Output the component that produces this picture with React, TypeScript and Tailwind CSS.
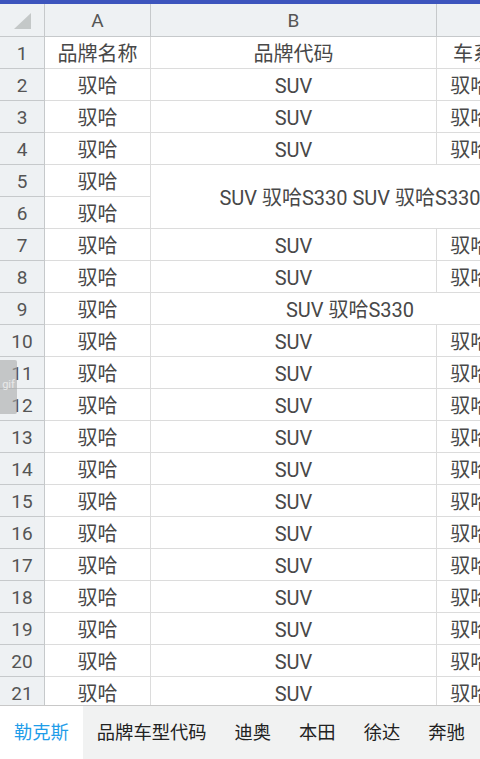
import React from "react";

type Row = { n: number; a: string; b?: string; c?: string; merge?: "span2" | "span2x2" | "skip" };

const rows: Row[] = [
  { n: 1, a: "品牌名称", b: "品牌代码", c: "车系名称" },
  { n: 2, a: "驭哈", b: "SUV", c: "驭哈S330" },
  { n: 3, a: "驭哈", b: "SUV", c: "驭哈S330" },
  { n: 4, a: "驭哈", b: "SUV", c: "驭哈S330" },
  { n: 5, a: "驭哈", b: "SUV 驭哈S330 SUV 驭哈S330", merge: "span2x2" },
  { n: 6, a: "驭哈", merge: "skip" },
  { n: 7, a: "驭哈", b: "SUV", c: "驭哈S330" },
  { n: 8, a: "驭哈", b: "SUV", c: "驭哈S330" },
  { n: 9, a: "驭哈", b: "SUV 驭哈S330", merge: "span2" },
  ...Array.from({ length: 12 }, (_, i) => ({ n: 10 + i, a: "驭哈", b: "SUV", c: "驭哈S330" })),
];

const tabs = ["勒克斯", "品牌车型代码", "迪奥", "本田", "徐达", "奔驰"];

const headCell =
  "flex items-center justify-center bg-[#eef1f3] border-r border-b border-[#c6c9cb] text-[#555] text-[19px] pt-[2px]";
const numCell =
  "flex items-center justify-center bg-[#eef1f3] border-r border-b border-[#c6c9cb] text-[#555] text-[19px] pt-[3px]";
const dataCell =
  "flex items-center justify-center bg-white border-r border-b border-[#dcdcdc] text-[#484848] text-[20px] whitespace-nowrap pt-[3px]";

export default function App() {
  return (
    <div
      className="relative flex h-[759px] w-[480px] flex-col overflow-hidden bg-white"
      style={{ fontFamily: "Roboto, 'Noto Sans CJK SC', sans-serif" }}
    >
      <div className="h-[4px] shrink-0 bg-[#3d55bd]" />

      <div className="min-h-0 flex-1 overflow-hidden">
        <div className="grid w-max grid-cols-[45px_106px_286px_113px] grid-rows-[33px] auto-rows-[32px]">
          {/* column header */}
          <div className={headCell}>
            <svg width="17" height="16" viewBox="0 0 17 16" className="mb-[1px]">
              <polygon points="17,0 17,16 0,16" fill="#c4c8c8" />
            </svg>
          </div>
          <div className={headCell}>A</div>
          <div className={headCell}>B</div>
          <div className={headCell}>C</div>

          {rows.map((r) => (
            <React.Fragment key={r.n}>
              <div className={numCell}>{r.n}</div>
              <div className={dataCell}>{r.a}</div>
              {r.merge === "span2x2" && (
                <div className={`${dataCell} col-span-2 row-span-2 overflow-visible`}>{r.b}</div>
              )}
              {r.merge === "span2" && <div className={`${dataCell} col-span-2`}>{r.b}</div>}
              {!r.merge && (
                <>
                  <div className={dataCell}>{r.b}</div>
                  <div className={dataCell}>{r.c}</div>
                </>
              )}
            </React.Fragment>
          ))}
        </div>
      </div>

      <div className="flex h-[54px] shrink-0 items-stretch overflow-hidden whitespace-nowrap border-t border-[#c8c8c8] bg-[#f1f2f2] text-[18.3px] text-[#222]">
        {tabs.map((t, i) => (
          <div
            key={t}
            className={
              i === 0
                ? "flex shrink-0 items-center bg-white px-[14px] pt-[1px] text-[#1f9de9]"
                : "flex shrink-0 items-center px-[14px] pt-[1px]"
            }
          >
            {t}
          </div>
        ))}
      </div>

      {/* floating gif handle */}
      <div className="absolute left-0 top-[360px] flex h-[54px] w-[17px] items-center justify-center rounded-r-[2px] bg-[#a8aaaa]/60 pb-[6px]">
        <span className="text-[11px] leading-none text-[#e9e9e9]">gif</span>
      </div>
    </div>
  );
}
